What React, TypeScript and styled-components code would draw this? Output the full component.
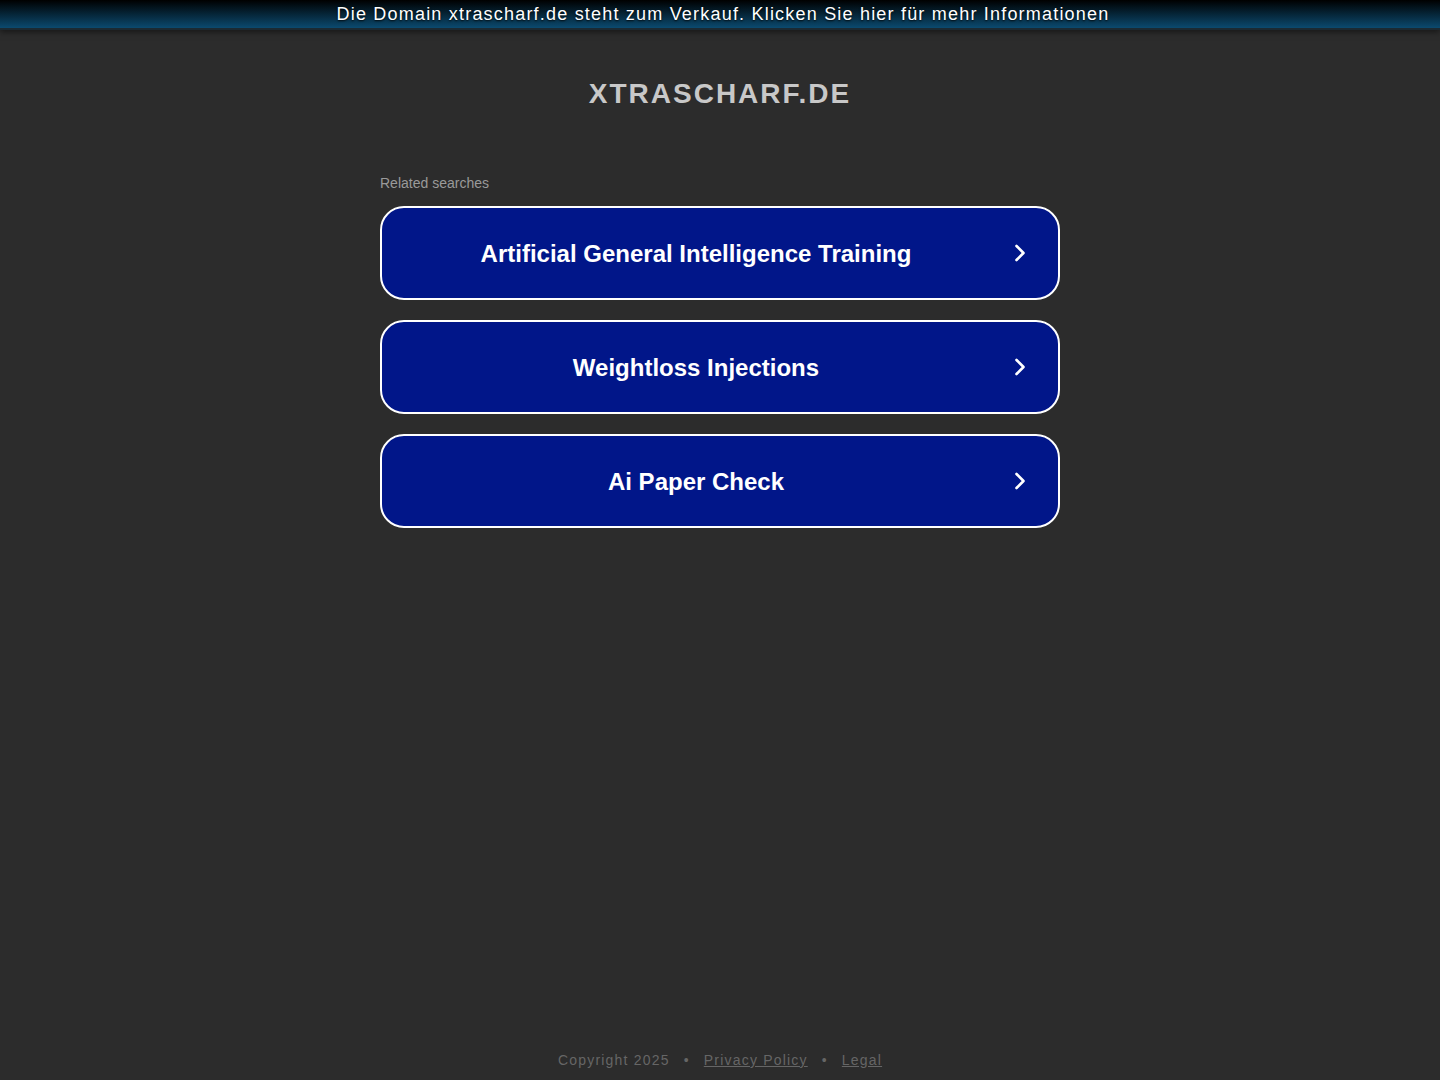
import styled, { createGlobalStyle } from 'styled-components';

const GlobalStyle = createGlobalStyle`
  html, body {
    margin: 0;
    padding: 0;
    background: #2c2c2c;
    font-family: Arial, "Liberation Sans", sans-serif;
  }
`;

const Page = styled.div`
  min-height: 1080px;
  display: flex;
  flex-direction: column;
  background: #2c2c2c;
`;

const TopBar = styled.a`
  display: block;
  height: 28px;
  line-height: 28px;
  padding-left: 6px;
  text-align: center;
  font-size: 18px;
  letter-spacing: 1.2px;
  color: #fff;
  text-decoration: none;
  text-shadow: 0 1px 2px rgba(0, 0, 0, 0.9);
  background: linear-gradient(to bottom, #000 0%, #0b4a6f 100%);
  border-bottom: 2px solid #1b2a33;
  box-shadow: 0 2px 6px rgba(0, 0, 0, 0.5);
`;

const Main = styled.main`
  flex: 1;
  display: flex;
  flex-direction: column;
  align-items: center;
`;

const DomainTitle = styled.h1`
  margin: 47px 0 0;
  font-size: 28px;
  font-weight: 700;
  letter-spacing: 2px;
  color: #c8c8c8;
  line-height: 34px;
`;

const Related = styled.section`
  width: 680px;
  margin-top: 64px;
  display: flex;
  flex-direction: column;
`;

const RelatedLabel = styled.div`
  font-size: 14px;
  color: #9a9a9a;
  line-height: 16px;
  margin-bottom: 15px;
`;

const List = styled.div`
  display: flex;
  flex-direction: column;
  gap: 20px;
`;

const SearchButton = styled.a`
  box-sizing: border-box;
  height: 94px;
  display: flex;
  align-items: center;
  padding: 2px 28px 0 20px;
  background: #011689;
  border: 2px solid #fff;
  border-radius: 24px;
  color: #fff;
  text-decoration: none;
  cursor: pointer;
`;

const ButtonText = styled.span`
  flex: 1;
  text-align: center;
  font-size: 24px;
  font-weight: 700;
`;

const Chevron = styled.svg`
  width: 20px;
  height: 20px;
  margin-left: 20px;
  margin-top: -2px;
`;

const Footer = styled.footer`
  display: flex;
  justify-content: center;
  padding-bottom: 12px;
  font-size: 14px;
  letter-spacing: 1.2px;
  color: #666;
  line-height: 16px;
`;

const Sep = styled.span`
  margin: 0 14px;
`;

const FooterLink = styled.a`
  color: #666;
  text-decoration: underline;
`;

const searches = [
  'Artificial General Intelligence Training',
  'Weightloss Injections',
  'Ai Paper Check',
];

export default function App() {
  return (
    <>
      <GlobalStyle />
      <Page>
        <TopBar>Die Domain xtrascharf.de steht zum Verkauf. Klicken Sie hier für mehr Informationen</TopBar>
        <Main>
          <DomainTitle>XTRASCHARF.DE</DomainTitle>
          <Related>
            <RelatedLabel>Related searches</RelatedLabel>
            <List>
              {searches.map((s) => (
                <SearchButton key={s}>
                  <ButtonText>{s}</ButtonText>
                  <Chevron viewBox="0 0 20 20" fill="none">
                    <path d="M6.5 3 L13.5 10 L6.5 17" stroke="#fff" strokeWidth="2.6" strokeLinecap="round" strokeLinejoin="round" />
                  </Chevron>
                </SearchButton>
              ))}
            </List>
          </Related>
        </Main>
        <Footer>
          <span>Copyright 2025</span>
          <Sep>•</Sep>
          <FooterLink>Privacy Policy</FooterLink>
          <Sep>•</Sep>
          <FooterLink>Legal</FooterLink>
        </Footer>
      </Page>
    </>
  );
}
